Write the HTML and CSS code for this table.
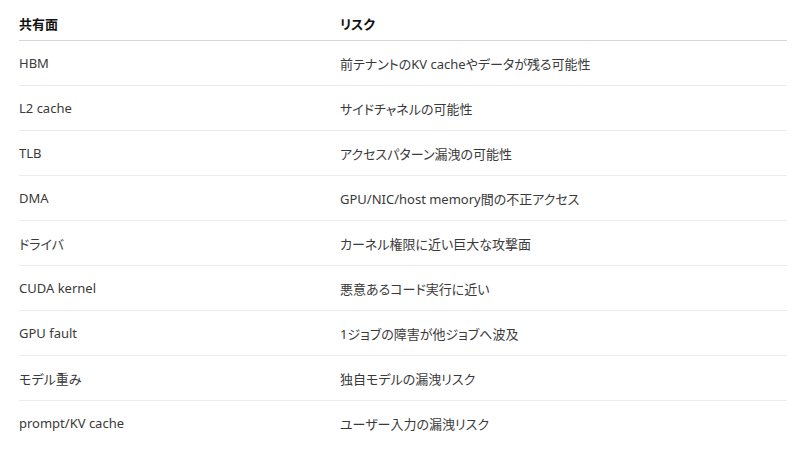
FILE: index.html
```html
<!DOCTYPE html>
<html lang="ja">
<head>
<meta charset="utf-8">
<link rel="stylesheet" href="styles.css">
</head>
<body>
<table class="risk-table">
  <thead>
    <tr><th class="c1">共有面</th><th>リスク</th></tr>
  </thead>
  <tbody>
    <tr><td>HBM</td><td>前テナントのKV cacheやデータが残る可能性</td></tr>
    <tr><td>L2 cache</td><td>サイドチャネルの可能性</td></tr>
    <tr><td>TLB</td><td>アクセスパターン漏洩の可能性</td></tr>
    <tr><td>DMA</td><td>GPU/NIC/host memory間の不正アクセス</td></tr>
    <tr><td>ドライバ</td><td>カーネル権限に近い巨大な攻撃面</td></tr>
    <tr><td>CUDA kernel</td><td>悪意あるコード実行に近い</td></tr>
    <tr><td>GPU fault</td><td>1ジョブの障害が他ジョブへ波及</td></tr>
    <tr><td>モデル重み</td><td>独自モデルの漏洩リスク</td></tr>
    <tr><td>prompt/KV cache</td><td>ユーザー入力の漏洩リスク</td></tr>
  </tbody>
</table>
</body>
</html>
```
FILE: styles.css
```css
html, body {
  margin: 0;
  padding: 0;
  background: #ffffff;
}
body {
  font-family: "Noto Sans", "Noto Sans CJK JP", sans-serif;
  font-size: 13px;
  color: #3a3a3a;
  font-feature-settings: "palt";
}
.risk-table {
  margin: 7px 0 0 19px;
  width: 768px;
  border-collapse: collapse;
  table-layout: fixed;
}
.risk-table th {
  text-align: left;
  font-weight: 700;
  color: #111111;
  height: 33px;
  padding: 0;
  border-bottom: 1px solid #d6d6d6;
  vertical-align: middle;
}
.risk-table th.c1 {
  width: 321px;
}
.risk-table td {
  height: 44px;
  padding: 0;
  border-bottom: 1px solid #ececec;
  vertical-align: middle;
}
.risk-table tbody tr:last-child td {
  border-bottom: none;
}
```
